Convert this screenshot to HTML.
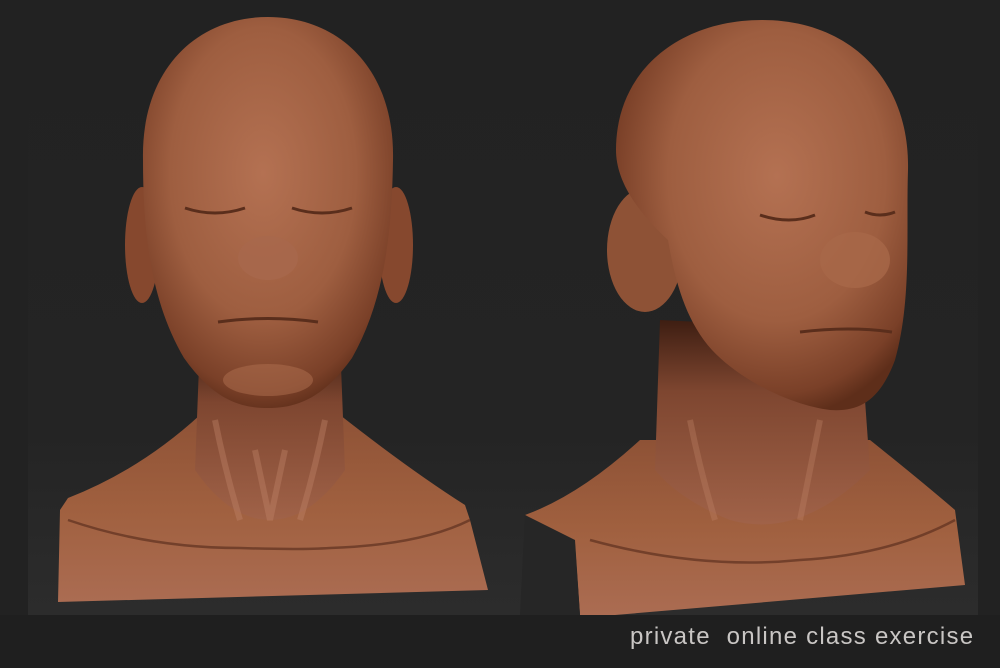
<!DOCTYPE html>
<html><head><style>
html,body{margin:0;padding:0;background:#222;}
body{width:1000px;height:668px;overflow:hidden;position:relative;}
svg{position:absolute;left:0;top:0}
.t{position:absolute;left:630px;top:623px;font-family:"Liberation Sans",sans-serif;font-size:24px;color:#c9c6c4;letter-spacing:1.25px;white-space:pre}
</style></head><body>
<svg width="1000" height="668" viewBox="0 0 1000 668">
<defs>
<linearGradient id="bg" x1="0" y1="0" x2="0" y2="1">
<stop offset="0" stop-color="#222"/><stop offset="0.7" stop-color="#242424"/><stop offset="1" stop-color="#2c2c2c"/></linearGradient>
<radialGradient id="head" cx="0.48" cy="0.4" r="0.62">
<stop offset="0" stop-color="#b47152"/><stop offset="0.6" stop-color="#9e5e40"/><stop offset="0.9" stop-color="#7a4028"/><stop offset="1" stop-color="#5e2e1a"/></radialGradient>
<radialGradient id="head2" cx="0.55" cy="0.4" r="0.62">
<stop offset="0" stop-color="#b47152"/><stop offset="0.6" stop-color="#9e5e40"/><stop offset="0.9" stop-color="#7a4028"/><stop offset="1" stop-color="#5e2e1a"/></radialGradient>
<linearGradient id="neck" x1="0" y1="0" x2="0" y2="1">
<stop offset="0" stop-color="#3e1e12"/><stop offset="0.35" stop-color="#7e4630"/><stop offset="1" stop-color="#a06248"/></linearGradient>
<linearGradient id="sh" x1="0" y1="0" x2="0" y2="1">
<stop offset="0" stop-color="#8e5236"/><stop offset="0.5" stop-color="#a0603f"/><stop offset="1" stop-color="#ab6c52"/></linearGradient>
</defs>
<rect x="0" y="0" width="1000" height="668" fill="#222"/>
<rect x="28" y="0" width="950" height="615" fill="url(#bg)"/>
<rect x="0" y="615" width="1000" height="53" fill="#1f1f1f"/>

<!-- left bust -->
<path d="M60 510 L68 498 Q140 470 200 415 L340 415 Q410 470 465 505 L470 520 L488 590 L58 602 Z" fill="url(#sh)"/>
<path d="M68 520 Q150 548 240 548 Q300 550 330 548 Q420 545 470 520" stroke="#5e3020" stroke-width="2.5" fill="none" opacity=".7"/>
<path d="M200 340 L340 340 L345 470 Q310 520 270 520 Q230 520 195 470 Z" fill="url(#neck)"/>
<path d="M215 420 Q225 470 240 520 M325 420 Q315 470 300 520 M255 450 L270 520 L285 450" stroke="#c08468" stroke-width="6" fill="none" opacity=".4"/>
<ellipse cx="142" cy="245" rx="17" ry="58" fill="#86482e"/>
<ellipse cx="396" cy="245" rx="17" ry="58" fill="#86482e"/>
<path d="M268 17 C340 17 395 70 393 160 C392 230 385 300 352 358 C322 400 295 408 268 408 C240 408 214 400 184 358 C150 300 143 230 143 160 C141 70 196 17 268 17Z" fill="url(#head)"/>
<ellipse cx="268" cy="258" rx="30" ry="22" fill="#a8684c" opacity=".8"/>
<path d="M185 208 Q215 218 245 208 M292 208 Q322 218 352 208" stroke="#5a2e1c" stroke-width="3" fill="none"/>
<path d="M218 322 Q268 315 318 322" stroke="#5a2e1c" stroke-width="3" fill="none"/>
<ellipse cx="268" cy="380" rx="45" ry="16" fill="#b07050" opacity=".5"/>

<!-- right bust -->
<path d="M525 515 Q580 495 640 440 L870 440 Q920 480 955 510 L965 585 L615 615 L580 615 L575 545 Z" fill="url(#sh)"/>
<path d="M525 515 L575 540 L580 615 L520 615 Z" fill="#262626"/>
<path d="M590 540 Q700 570 800 560 Q890 555 955 520" stroke="#5e3020" stroke-width="2.5" fill="none" opacity=".7"/>
<path d="M660 320 L860 330 L870 470 Q800 540 730 520 Q680 500 655 470 Z" fill="url(#neck)"/>
<path d="M690 420 Q700 470 715 520 M820 420 Q810 470 800 520" stroke="#c08468" stroke-width="6" fill="none" opacity=".35"/>
<ellipse cx="645" cy="250" rx="38" ry="62" fill="#8e5236"/>
<path d="M762 20 C850 20 910 80 908 170 C906 230 912 300 895 360 C880 400 860 412 830 410 C790 405 740 380 712 350 C685 320 675 280 668 240 C630 205 616 175 616 150 C616 70 680 20 762 20Z" fill="url(#head2)"/>
<ellipse cx="855" cy="260" rx="35" ry="28" fill="#a86848" opacity=".8"/>
<path d="M760 215 Q790 225 815 215 M865 212 Q880 218 895 212" stroke="#5a2e1c" stroke-width="3" fill="none"/>
<path d="M800 332 Q850 326 892 332" stroke="#5a2e1c" stroke-width="3" fill="none"/>
</svg>
<div class="t">private  online class exercise</div>
</body></html>
